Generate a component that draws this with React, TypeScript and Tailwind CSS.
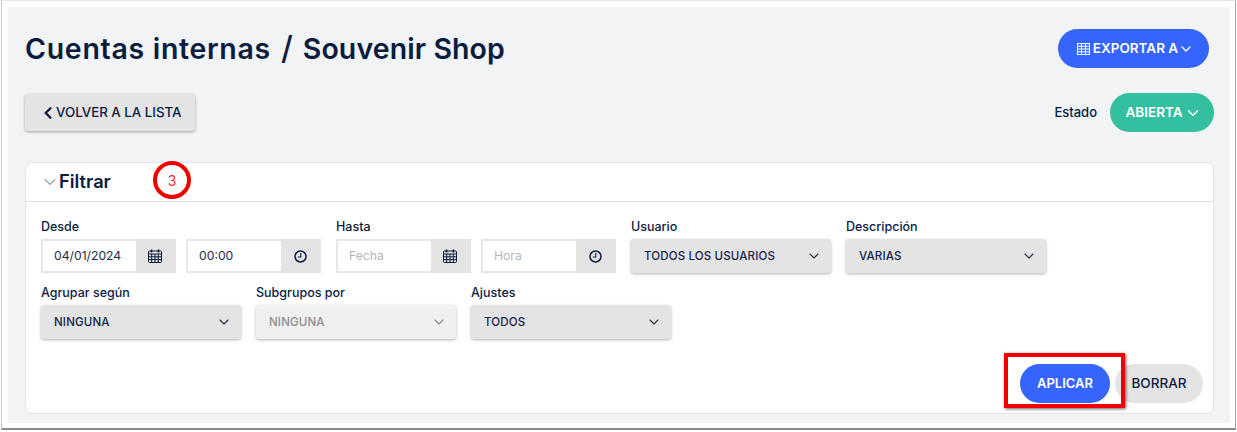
import { ChevronDown } from "lucide-react";
import { FaChevronLeft } from "react-icons/fa";

function CalendarIcon() {
  return (
    <svg width="14" height="14" viewBox="0 0 14 14" fill="none" stroke="#0b1c3f" strokeWidth="1">
      <rect x="0.5" y="2" width="13" height="11.5" rx="1" />
      <path d="M0.5 5h13M0.5 7.8h13M0.5 10.6h13M3.7 5v8.5M7 5v8.5M10.3 5v8.5" />
      <path d="M3.5 0.5v3M10.5 0.5v3" strokeWidth="1.6" />
    </svg>
  );
}

function ClockIcon() {
  return (
    <svg width="13" height="13" viewBox="0 0 13 13" fill="none" stroke="#0b1c3f" strokeWidth="1.5">
      <circle cx="6.5" cy="6.5" r="5.5" />
      <path d="M6.8 3v4H3.8" strokeWidth="1.1" />
    </svg>
  );
}

function TableIcon() {
  return (
    <svg width="13" height="12" viewBox="0 0 13 12" fill="none" stroke="currentColor" strokeWidth="1">
      <rect x="0.5" y="0.5" width="12" height="11" />
      <path d="M0.5 3.2h12M0.5 6h12M0.5 8.8h12M4.5 0.5v11M8.5 0.5v11" />
    </svg>
  );
}

function DateInput({ value, placeholder, icon }: { value?: string; placeholder?: string; icon: "date" | "time" }) {
  return (
    <div className="flex h-[34px] w-[135px]">
      <div className={`flex w-[95px] items-center border-2 border-r-0 border-[#e8e8e8] bg-white pl-[11px] text-[12.2px] ${value ? "text-[#1c2c50]" : "text-[#b5b5b5]"}`}>
        {value ?? placeholder}
      </div>
      <div className="flex w-[40px] items-center justify-center bg-[#e3e3e3] pr-[2px]">
        {icon === "date" ? <CalendarIcon /> : <ClockIcon />}
      </div>
    </div>
  );
}

function Select({ value, disabled }: { value: string; disabled?: boolean }) {
  return (
    <div className={`flex h-[34px] w-[200px] items-center justify-between rounded-[3px] pl-[13px] pr-[9px] text-[11.5px] font-medium tracking-[0.15px] shadow-[0_1px_3px_rgba(0,0,0,0.3)] ${disabled ? "bg-[#f0f0f0] text-[#8d8d8d]" : "bg-[#e4e4e4] text-[#14244a]"}`}>
      <span className="pt-px">{value}</span>
      <ChevronDown size={16} strokeWidth={1.75} className={disabled ? "text-[#8d8d8d]" : "text-[#2a3550]"} />
    </div>
  );
}

function Field({ label, children, className }: { label: string; children: React.ReactNode; className?: string }) {
  return (
    <div className={className}>
      <div className="mb-[3px] h-[19px] text-[12.5px] font-medium leading-[19px] text-[#0b1c3f]">{label}</div>
      {children}
    </div>
  );
}

export default function App() {
  return (
    <div className="relative h-[432px] w-[1237px] overflow-hidden bg-white font-['Inter',sans-serif] text-[#0b1c3f]">
      <div className="ml-px h-[430px] w-[1235px] border border-b-2 border-[#c4c4c4] border-b-[#8a8a8a] border-t-[#e6e6e6] border-r-[#a5a5a5] pl-[6px] pr-[5px] pt-[6px] pb-[5px]">
        <div className="h-full bg-[#f1f3f5] pl-[17px] pr-[15px]">
          <div className="flex items-center justify-between pt-[22px] pr-[6px]">
            <h1 className="text-[28.5px] font-semibold leading-[39px]">
              <span className="tracking-[0.7px]">Cuentas internas</span>
              <span className="mx-[10px] text-[32px] font-medium leading-none">/</span>
              <span className="tracking-[0.1px]">Souvenir Shop</span>
            </h1>
            <button className="flex h-[39px] w-[151px] items-center justify-center gap-[3px] rounded-full bg-[#3565fc] pl-[4px] text-[13.5px] font-semibold text-white">
              <TableIcon />
              EXPORTAR A
              <ChevronDown size={16} strokeWidth={2} className="-ml-[3px]" />
            </button>
          </div>

          <div className="mt-[25px] flex items-center justify-between pr-px">
            <button className="flex h-[37px] w-[170px] items-center gap-[1px] rounded-[3px] bg-[#e4e4e4] pl-[16px] text-[13.3px] font-medium text-[#0b1c3f] shadow-[0_1px_3px_rgba(0,0,0,0.35)]">
              <FaChevronLeft size={14} />
              VOLVER A LA LISTA
            </button>
            <div className="flex items-center gap-[13px]">
              <span className="pt-px text-[13px] font-medium">Estado</span>
              <button className="flex h-[39px] w-[104px] items-center justify-center gap-[1px] rounded-full bg-[#34bfa0] pl-[3px] text-[13.5px] font-semibold text-white">
                ABIERTA
                <ChevronDown size={18} strokeWidth={2} />
              </button>
            </div>
          </div>

          <section className="mt-[30px] h-[252px] w-[1189px] rounded-[8px] border border-[#e3e5e8] bg-white">
            <div className="flex h-[39px] items-center border-b border-[#e0e0e0] pl-[14px]">
              <ChevronDown size={20} strokeWidth={1.2} className="-mr-px text-[#4a5570]" />
              <span className="text-[18.3px] font-semibold">Filtrar</span>
            </div>

            <div className="flex flex-col gap-[10px] pl-[15px] pt-[15px]">
              <div className="flex">
                <Field label="Desde">
                  <div className="flex gap-[10px]">
                    <DateInput value="04/01/2024" icon="date" />
                    <DateInput value="00:00" icon="time" />
                  </div>
                </Field>
                <Field label="Hasta" className="ml-[15px]">
                  <div className="flex gap-[10px]">
                    <DateInput placeholder="Fecha" icon="date" />
                    <DateInput placeholder="Hora" icon="time" />
                  </div>
                </Field>
                <Field label="Usuario" className="ml-[15px]">
                  <Select value="TODOS LOS USUARIOS" />
                </Field>
                <Field label="Descripción" className="ml-[15px]">
                  <Select value="VARIAS" />
                </Field>
              </div>
              <div className="flex gap-[15px]">
                <Field label="Agrupar según">
                  <Select value="NINGUNA" />
                </Field>
                <Field label="Subgrupos por">
                  <Select value="NINGUNA" disabled />
                </Field>
                <Field label="Ajustes">
                  <Select value="TODOS" />
                </Field>
              </div>
            </div>

            <div className="mt-[25px] flex justify-end gap-[5px] pr-[10px]">
              <button className="h-[39px] w-[90px] rounded-full bg-[#3565fc] text-[13px] font-semibold text-white">APLICAR</button>
              <button className="h-[39px] w-[88px] rounded-full bg-[#e4e4e4] text-[13.5px] font-medium text-[#0b1c3f]">BORRAR</button>
            </div>
          </section>
        </div>
      </div>

      {/* annotations drawn over the screenshot */}
      <div className="absolute left-[153px] top-[161px] flex h-[38px] w-[38px] items-center justify-center rounded-full border-[4px] border-[#f00000] bg-white text-[14px] text-[#f03030]">
        3
      </div>
      <div className="absolute left-[1004px] top-[353px] h-[55px] w-[121px] border-[4px] border-[#f00000] shadow-[1px_1px_3px_rgba(0,0,0,0.6)]" />
    </div>
  );
}
